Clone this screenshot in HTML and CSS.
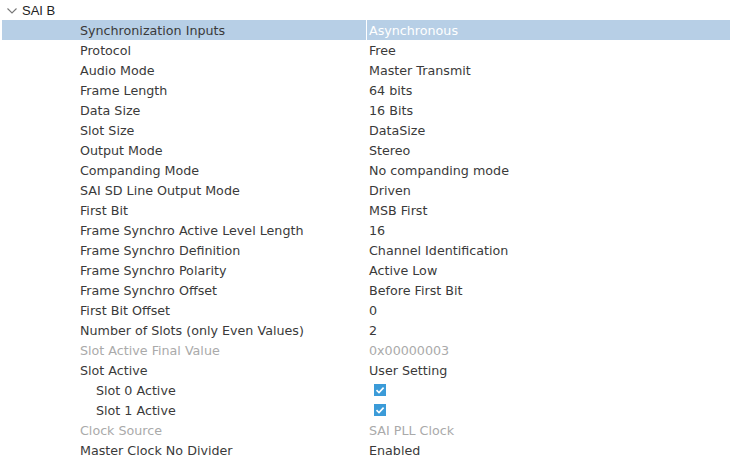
FILE: index.html
```html
<!DOCTYPE html>
<html lang="en">
<head>
  <meta charset="UTF-8">
  <title>SAI B</title>
  <link rel="stylesheet" href="styles.css">
</head>
<body>
  <div class="group">
    <div class="group-head">
      <svg class="chevron" width="10" height="6" viewBox="0 0 10 6"><path d="M0.5 0.5 L5 5 L9.5 0.5" fill="none" stroke="#777" stroke-width="1.1"/></svg>
      <span>SAI B</span>
    </div>
    <div class="row selected"><div class="name">Synchronization Inputs</div><div class="value">Asynchronous</div></div>
    <div class="row"><div class="name">Protocol</div><div class="value">Free</div></div>
    <div class="row"><div class="name">Audio Mode</div><div class="value">Master Transmit</div></div>
    <div class="row"><div class="name">Frame Length</div><div class="value">64 bits</div></div>
    <div class="row"><div class="name">Data Size</div><div class="value">16 Bits</div></div>
    <div class="row"><div class="name">Slot Size</div><div class="value">DataSize</div></div>
    <div class="row"><div class="name">Output Mode</div><div class="value">Stereo</div></div>
    <div class="row"><div class="name">Companding Mode</div><div class="value">No companding mode</div></div>
    <div class="row"><div class="name">SAI SD Line Output Mode</div><div class="value">Driven</div></div>
    <div class="row"><div class="name">First Bit</div><div class="value">MSB First</div></div>
    <div class="row"><div class="name">Frame Synchro Active Level Length</div><div class="value">16</div></div>
    <div class="row"><div class="name">Frame Synchro Definition</div><div class="value">Channel Identification</div></div>
    <div class="row"><div class="name">Frame Synchro Polarity</div><div class="value">Active Low</div></div>
    <div class="row"><div class="name">Frame Synchro Offset</div><div class="value">Before First Bit</div></div>
    <div class="row"><div class="name">First Bit Offset</div><div class="value">0</div></div>
    <div class="row"><div class="name">Number of Slots (only Even Values)</div><div class="value">2</div></div>
    <div class="row disabled"><div class="name">Slot Active Final Value</div><div class="value">0x00000003</div></div>
    <div class="row"><div class="name">Slot Active</div><div class="value">User Setting</div></div>
    <div class="row"><div class="name sub">Slot 0 Active</div><div class="value"><span class="check"><svg width="12" height="12" viewBox="0 0 12 12"><path d="M2.5 6.2 L5 8.6 L9.6 3.6" fill="none" stroke="#fff" stroke-width="1.6"/></svg></span></div></div>
    <div class="row"><div class="name sub">Slot 1 Active</div><div class="value"><span class="check"><svg width="12" height="12" viewBox="0 0 12 12"><path d="M2.5 6.2 L5 8.6 L9.6 3.6" fill="none" stroke="#fff" stroke-width="1.6"/></svg></span></div></div>
    <div class="row disabled"><div class="name">Clock Source</div><div class="value">SAI PLL Clock</div></div>
    <div class="row"><div class="name">Master Clock No Divider</div><div class="value">Enabled</div></div>
  </div>
</body>
</html>
```

FILE: styles.css
```css
body {
  margin: 0;
  background: #fff;
  font-family: "DejaVu Sans", Verdana, sans-serif;
  font-size: 12.7px;
  color: #3a3a3a;
}
.group-head {
  height: 20px;
  display: flex;
  align-items: center;
  padding-left: 7px;
  gap: 5px;
  font-family: "Liberation Sans", Arial, sans-serif;
  font-size: 13px;
  color: #222;
}
.chevron {
  margin-top: 1px;
}
.row {
  display: flex;
  height: 20px;
  line-height: 20px;
  margin-left: 2px;
}
.name {
  width: 286px;
  padding-left: 78px;
  padding-top: 1px;
  white-space: nowrap;
}
.name.sub {
  padding-left: 94px;
  width: 270px;
}
.value {
  padding-left: 3px;
  padding-top: 1px;
  white-space: nowrap;
}
.selected {
  background: #b7cfe6;
}
.selected .value {
  color: #fff;
  border-left: 1px solid #fff;
  padding-left: 2px;
}
.disabled {
  color: #aaa;
}
.check {
  display: block;
  width: 12px;
  height: 12px;
  margin: 3px 0 0 5px;
  background: #3b9bd8;
}
.check svg {
  display: block;
}
```
